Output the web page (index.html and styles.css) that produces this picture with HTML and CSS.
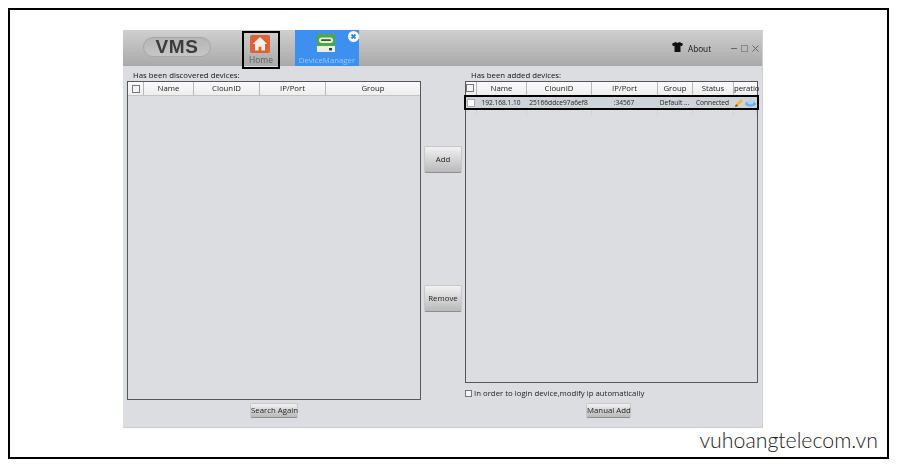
FILE: index.html
```html
<!DOCTYPE html>
<html lang="en">
<head>
<meta charset="utf-8">
<title>VMS</title>
<link rel="stylesheet" href="styles.css">
</head>
<body>
<div class="frame">
  <div class="window">
    <header class="titlebar">
      <div class="logo">VMS</div>
      <div class="tab-home">
        <svg class="home-icon" viewBox="0 0 20 18" width="20" height="18"><rect width="20" height="18" rx="2" fill="#dc6236"/><path d="M10 2 2.800 9H5v6.500h3.600v-3.800h2.800v3.800H15V9h2.200z" fill="#fbeee6"/></svg>
        <span class="home-label">Home</span>
      </div>
      <div class="tab-device">
        <svg class="device-icon" viewBox="0 0 18 18" width="18" height="18"><rect width="18" height="18" fill="#4fa844"/><rect y="12" width="18" height="6" fill="#e8efe0"/><rect x="2" y="3.500" width="14" height="5.500" rx="2.700" fill="#e4efe0"/><rect x="4" y="5.300" width="10" height="1.800" rx=".9" fill="#2d5f2a"/><rect x="12" y="14" width="3" height="2.400" fill="#244"/></svg>
        <span class="device-label">DeviceManager</span>
        <svg class="tab-close" viewBox="0 0 11 11" width="11" height="11"><circle cx="5.500" cy="5.500" r="5.500" fill="#fff"/><path d="M3.500 3.500l4 4M7.500 3.500l-4 4" stroke="#2f7fd8" stroke-width="1.800"/></svg>
      </div>
      <div class="spacer"></div>
      <svg class="shirt" viewBox="0 0 11 10" width="11" height="10"><path d="M3.500 0 0 1.800 1 4.200l1.500-.5V10h6V3.700l1.500.5 1-2.400L7.500 0 5.500 1z" fill="#111"/></svg>
      <span class="about">About</span>
      <div class="controls">
        <span class="ctl-min"></span>
        <span class="ctl-max"></span>
        <svg class="ctl-close" viewBox="0 0 7 7" width="7" height="7"><path d="M.5.5l6 6M6.500.5l-6 6" stroke="#666" stroke-width="1"/></svg>
      </div>
    </header>
    <main class="content">
      <section class="panel panel-left">
        <div class="panel-title">Has been discovered devices:</div>
        <div class="table table-left">
          <div class="thead cols-left">
            <div class="th th-check"><span class="check"></span></div>
            <div class="th">Name</div>
            <div class="th">ClounID</div>
            <div class="th">IP/Port</div>
            <div class="th">Group</div>
          </div>
        </div>
        <div class="panel-foot foot-left">
          <button class="btn btn-small btn-search">Search Again</button>
        </div>
      </section>
      <div class="middle">
        <button class="btn btn-big">Add</button>
        <button class="btn btn-big">Remove</button>
      </div>
      <section class="panel panel-right">
        <div class="panel-title">Has been added devices:</div>
        <div class="table table-right">
          <div class="thead cols-right">
            <div class="th th-check th-check-tight"><span class="check"></span></div>
            <div class="th">Name</div>
            <div class="th">ClounID</div>
            <div class="th">IP/Port</div>
            <div class="th">Group</div>
            <div class="th">Status</div>
            <div class="th th-clip">peratio</div>
          </div>
          <div class="row">
            <div class="td td-check"><span class="check check-white"></span></div>
            <div class="td">192.168.1.10</div>
            <div class="td">25166ddce97a6ef8</div>
            <div class="td">:34567</div>
            <div class="td">Default ...</div>
            <div class="td">Connected</div>
            <div class="td td-ops">
              <svg viewBox="0 0 10 10" width="10" height="10"><path d="M1 9l1-3 5-5 2 2-5 5z" fill="#e9b92f"/><path d="M1 9l1-3 2 2z" fill="#7a4a20"/></svg>
              <svg viewBox="0 0 12 8" width="11" height="8"><ellipse cx="6" cy="5" rx="6" ry="3" fill="#6db0e8"/><ellipse cx="6" cy="3" rx="3.500" ry="2.500" fill="#a9d4f5"/></svg>
            </div>
          </div>
          <div class="ghost cols-right">
            <div></div><div></div><div></div><div></div><div></div><div></div><div></div>
          </div>
        </div>
        <label class="auto-ip"><span class="check check-plain"></span>In order to login device,modify ip automatically</label>
        <div class="panel-foot foot-right">
          <button class="btn btn-small btn-manual">Manual Add</button>
        </div>
      </section>
    </main>
  </div>
  <div class="watermark">vuhoangtelecom.vn</div>
</div>
</body>
</html>
```
FILE: styles.css
```css
* { box-sizing: border-box; }
html, body { margin: 0; padding: 0; background: #fff; }
body { width: 900px; height: 474px; overflow: hidden; font-family: "Open Sans", "Liberation Sans", sans-serif; color: #222; }

.frame {
  margin: 8px 0 0 8px;
  width: 881px;
  height: 451px;
  border: 2px solid #000;
  padding: 20px 0 0 113px;
}

.window {
  width: 640px;
  height: 398px;
  background: #dcdde0;
  border: 1px solid #cfcfcf;
  border-top: 0;
  border-left: 0;
  display: flex;
  flex-direction: column;
  filter: blur(0.3px);
}

/* title bar */
.titlebar {
  height: 36px;
  flex: none;
  background: linear-gradient(#cfcfcf, #a9a9a9);
  display: flex;
  align-items: flex-start;
  color: #111;
}
.logo {
  margin: 7px 0 0 20px;
  width: 68px;
  height: 20px;
  border: 1px solid #a6a6a6;
  border-radius: 10px;
  background: linear-gradient(#b6b6b6, #c6c6c6);
  font: bold 19px/18px "Liberation Sans", sans-serif;
  letter-spacing: 0.6px;
  text-align: center;
  color: #3c3c3c;
}
.tab-home {
  margin: 1px 0 0 31px;
  width: 38px;
  height: 38px;
  border: 2px solid #000;
  display: flex;
  flex-direction: column;
  align-items: center;
  padding-top: 2px;
  position: relative;
  z-index: 1;
}
.home-icon { display: block; flex: none; margin-left: -2px; }
.home-label { font-size: 8.5px; line-height: 11px; color: #5c5c5c; margin-top: 1px; }
.tab-device {
  margin: 0 0 0 15px;
  width: 64px;
  height: 36px;
  background: #3d90f0;
  display: flex;
  flex-direction: column;
  align-items: center;
  padding-top: 4px;
  position: relative;
}
.device-icon { display: block; flex: none; margin-left: -2px; }
.device-label { font-size: 7.8px; line-height: 11px; color: #9cc7f5; margin-top: 3px; white-space: nowrap; }
.tab-close { position: absolute; top: 1px; right: 0; }
.spacer { flex: 1; }
.shirt { margin-top: 12px; flex: none; }
.about { margin: 12px 0 0 5px; width: 24px; font-size: 8.2px; line-height: 13px; color: #111; }
.controls { margin: 15px 2px 0 19px; width: 29px; display: flex; align-items: center; gap: 3px; height: 7px; }
.ctl-min { width: 6px; height: 1px; background: #666; }
.ctl-max { width: 7px; height: 7px; border: 1px solid #888; margin-left: 1px; }
.ctl-close { display: block; margin-left: 1px; }

/* content */
.content { flex: 1; display: flex; padding-left: 4px; }
.panel { display: flex; flex-direction: column; }
.panel-left { width: 294px; }
.panel-right { width: 293px; }
.panel-title { height: 15px; padding: 3px 0 0 6px; font-size: 7.8px; line-height: 12px; color: #111; }
.table {
  border: 1px solid #55585a;
  background: #dcdde0;
}
.table-left { height: 319px; }
.table-right { height: 302px; }
.thead {
  display: grid;
  height: 14px;
  background: linear-gradient(#fafafa, #eeeeee);
  border-bottom: 1px solid #c4c4c4;
}
.cols-left { grid-template-columns: 16px 50px 66px 66px 1fr; }
.cols-right { grid-template-columns: 11px 50px 65px 66px 35px 41px 1fr; }
.th {
  border-right: 1px solid #b8b8b8;
  font-size: 7.8px;
  line-height: 13px;
  text-align: center;
  color: #222;
  white-space: nowrap;
}
.th:last-child { border-right: 0; }
.th-check { display: flex; align-items: center; justify-content: center; }
.th-check-tight { justify-content: flex-start; align-items: flex-start; padding-top: 2px; }
.th-clip { letter-spacing: -0.1px; }
.check { display: block; width: 8px; height: 8px; border: 1px solid #777; background: #f4f4f4; flex: none; }
.check-white { background: #fff; border-color: #aaa; }
.check-plain { margin-right: 2px; width: 7px; height: 7px; }

.row {
  display: grid;
  grid-template-columns: 10px 50px 65px 66px 35px 41px 1fr;
  height: 15px;
  margin: -1px -2px 0;
  background: #cfd3da;
  border: 2px solid #000;
  position: relative;
}
.td {
  font-size: 6.6px;
  line-height: 11px;
  text-align: center;
  color: #222;
  white-space: nowrap;
}
.td-check { display: flex; align-items: center; justify-content: center; }
.td-ops { display: flex; align-items: center; gap: 1px; padding-left: 1px; }
.td-ops svg { flex: none; }
.ghost { display: grid; height: 6px; }
.ghost div { border-right: 1px solid #d2d3d6; }

/* middle */
.middle { width: 44px; flex: none; display: flex; flex-direction: column; align-items: center; padding: 80px 0 0; gap: 112px; }

/* buttons */
.btn {
  display: block;
  padding: 0;
  border: 1px solid #c8c8c8;
  border-bottom-color: #8e8e8e;
  border-radius: 2px;
  background: linear-gradient(#f1f1f1, #b9b9b9);
  font-family: "Open Sans", "Liberation Sans", sans-serif;
  font-size: 7.8px;
  color: #222;
  white-space: nowrap;
}
.btn-big { width: 38px; height: 27px; padding-bottom: 2px; }
.btn-small { height: 15px; padding-bottom: 1px; }
.btn-search { width: 48px; }
.btn-manual { width: 45px; }
.panel-foot { display: flex; justify-content: center; }
.foot-left { padding-top: 3px; }
.foot-right { padding-right: 6px; }
.auto-ip { height: 20px; display: flex; align-items: center; font-size: 7.8px; color: #222; white-space: nowrap; }

/* watermark */
.watermark {
  margin: 0 0 0 -113px;
  width: 868px;
  text-align: right;
  font-family: "Lato", "Liberation Sans", sans-serif;
  font-weight: 300;
  font-size: 21.3px;
  line-height: 24px;
  color: #222;
}
```
